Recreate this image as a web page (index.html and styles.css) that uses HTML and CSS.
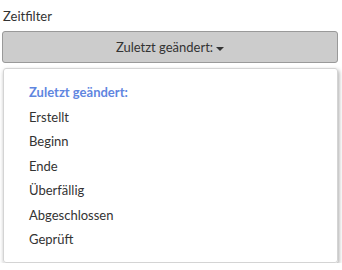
FILE: index.html
```html
<!DOCTYPE html>
<html lang="de">
<head>
    <meta charset="UTF-8">
    <title>Zeitfilter</title>
    <link rel="stylesheet" href="styles.css">
</head>
<body>
    <div class="filter">
        <label class="label">Zeitfilter</label>
        <button class="toggle">Zuletzt geändert:<span class="caret"></span></button>
        <ul class="menu">
            <li class="active">Zuletzt geändert:</li>
            <li>Erstellt</li>
            <li>Beginn</li>
            <li>Ende</li>
            <li>Überfällig</li>
            <li>Abgeschlossen</li>
            <li>Geprüft</li>
        </ul>
    </div>
</body>
</html>
```

FILE: styles.css
```css
body{
    margin: 0;
    padding: 6px 4px 0 2px;
    font: 13px Lato, "Open Sans", sans-serif;
    color: #333333;
    background: #ffffff;
}
.label
{
    display: block;
    padding-left: 1px;
    line-height: 20px;
    margin-bottom: 5px;
}
.toggle
{
    display: block;
    width: 100%;
    height: 32px;
    font: 13px Lato, "Open Sans", sans-serif;
    color: #333333;
    background-color: #cccccc;
    border: 1px solid #999999;
    border-radius: 3px;
}
.caret
{
    display: inline-block;
    margin-left: 3px;
    vertical-align: middle;
    border-top: 4px solid #333333;
    border-left: 4px solid transparent;
    border-right: 4px solid transparent;
}
.menu{
    list-style: none;
    margin: 5px 0 0 1px;
    padding: 11px 0 10px 0;
    border: 1px solid #d4d4d4;
    border-radius: 3px;
    box-shadow: 1px 2px 4px rgba(0,0,0,0.35);
}
.menu li
{
    padding-left: 25px;
    line-height: 24.5px;
}
.menu li.active
{
    color: #5f86df;
    font-weight: bold;
}
```
